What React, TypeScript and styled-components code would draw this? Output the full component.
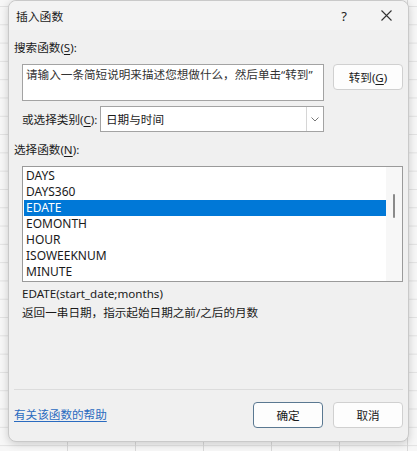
import React from "react";
import styled, { createGlobalStyle } from "styled-components";

const FONT = `"Noto Sans", "Noto Sans CJK SC", sans-serif`;

const GlobalStyle = createGlobalStyle`
  html, body { margin: 0; padding: 0; }
  body {
    width: 417px;
    height: 451px;
    overflow: hidden;
    font-family: ${FONT};
    background-color: #f7f7f7;
    background-image:
      linear-gradient(to right, #d9d9d9 1px, transparent 1px),
      linear-gradient(to bottom, #e2e2e2 1px, transparent 1px);
    background-size: 68px 18.3px;
    background-position: 67px 6px;
  }
`;

const Page = styled.div`
  padding-left: 8px;
  width: 417px;
  height: 451px;
  box-sizing: border-box;
`;

const Dialog = styled.div`
  width: 401px;
  height: 442px;
  box-sizing: border-box;
  background: #f0f0f0;
  border: 1px solid #c9c9c9;
  border-radius: 8px;
  box-shadow: 0 2px 8px rgba(0, 0, 0, 0.18);
  display: flex;
  flex-direction: column;
  font-size: 11.6px;
  color: #1a1a1a;
`;

const TitleBar = styled.div`
  height: 29px;
  display: flex;
  align-items: center;
  padding-left: 7px;
  background: #f3f3f3;
  border-radius: 8px 8px 0 0;
`;

const Title = styled.div`
  flex: 1;
  font-size: 11.8px;
  color: #1a1a1a;
`;

const TitleButton = styled.div<{ $w: number }>`
  width: ${(p) => p.$w}px;
  height: 29px;
  display: flex;
  align-items: center;
  justify-content: center;
  font-size: 13px;
  color: #222;
`;

const Body = styled.div`
  flex: 1;
  display: flex;
  flex-direction: column;
  padding: 0 5px;
`;

const Label = styled.div<{ $top: number; $indent?: number }>`
  margin-top: ${(p) => p.$top}px;
  margin-left: ${(p) => p.$indent ?? 0}px;
  line-height: 16px;
  height: 16px;
  white-space: nowrap;
`;

const Key = styled.span`
  text-decoration: underline;
  text-underline-offset: 2px;
`;

const SearchRow = styled.div`
  margin-top: 8px;
  margin-left: 8px;
  display: flex;
  align-items: flex-start;
  gap: 9px;
`;

const SearchBox = styled.textarea`
  width: 302px;
  height: 37px;
  box-sizing: border-box;
  border: 1px solid #a3a3a3;
  background: #fff;
  padding: 2px 3px;
  margin: 0;
  resize: none;
  outline: none;
  font-family: ${FONT};
  font-size: 11.6px;
  line-height: 16px;
  color: #333;
  overflow: hidden;
`;

const Button = styled.button<{ $primary?: boolean }>`
  width: 70px;
  height: 26px;
  box-sizing: border-box;
  border-radius: 4px;
  border: 1px solid ${(p) => (p.$primary ? "#5a7891" : "#d0d0d0")};
  background: #fdfdfd;
  font-family: ${FONT};
  font-size: 11.6px;
  color: #1a1a1a;
  padding: 0;
  display: flex;
  align-items: center;
  justify-content: center;
`;

const CategoryRow = styled.div`
  margin-top: 5px;
  margin-left: 8px;
  display: flex;
  align-items: center;
  gap: 1px;
`;

const CategoryLabel = styled.div`
  width: 77px;
  white-space: nowrap;
`;

const Combo = styled.div`
  width: 224px;
  height: 26px;
  box-sizing: border-box;
  border: 1px solid #a3a3a3;
  background: #fff;
  display: flex;
  align-items: stretch;
`;

const ComboValue = styled.div`
  flex: 1;
  display: flex;
  align-items: center;
  padding-left: 5px;
`;

const ComboArrow = styled.div`
  width: 16px;
  border-left: 1px solid #d6d6d6;
  display: flex;
  align-items: center;
  justify-content: center;
`;

const List = styled.div`
  margin-top: 8px;
  margin-left: 8px;
  width: 381px;
  height: 116px;
  box-sizing: border-box;
  border: 1px solid #9a9a9a;
  background: #fff;
  display: flex;
  padding: 1px 0 0 1px;
`;

const Items = styled.div`
  width: 362px;
  display: flex;
  flex-direction: column;
`;

const Item = styled.div<{ $selected?: boolean }>`
  height: 16px;
  line-height: 16px;
  padding-left: 2px;
  font-size: 12px;
  background: ${(p) => (p.$selected ? "#0078d7" : "transparent")};
  color: ${(p) => (p.$selected ? "#fff" : "#1a1a1a")};
`;

const ScrollTrack = styled.div`
  flex: 1;
  display: flex;
  justify-content: center;
  background: #f7f7f7;
  margin-top: -1px;
`;

const ScrollThumb = styled.div`
  width: 2px;
  height: 24px;
  margin-top: 27px;
  border-radius: 1px;
  background: #8a8a8a;
`;

const Info = styled.div<{ $top: number }>`
  margin-top: ${(p) => p.$top}px;
  margin-left: 8px;
  line-height: 16px;
  height: 16px;
  white-space: nowrap;
`;

const Spacer = styled.div`
  flex: 1;
`;

const Separator = styled.div`
  height: 1px;
  background: #dcdcdc;
`;

const Footer = styled.div`
  height: 51px;
  display: flex;
  align-items: center;
  gap: 10px;
  padding-bottom: 1px;
  box-sizing: border-box;
`;

const HelpLink = styled.a`
  flex: 1;
  color: #2a6bc0;
  text-decoration: underline;
  text-underline-offset: 2px;
  cursor: pointer;
  margin-top: -2px;
`;

const functions = ["DAYS", "DAYS360", "EDATE", "EOMONTH", "HOUR", "ISOWEEKNUM", "MINUTE"];

export default function App() {
  return (
    <>
      <GlobalStyle />
      <Page>
        <Dialog>
          <TitleBar>
            <Title>插入函数</Title>
            <TitleButton $w={40}>?</TitleButton>
            <TitleButton $w={44}>
              <svg width="11" height="11" viewBox="0 0 11 11">
                <path d="M0.5 0.5 L10.5 10.5 M10.5 0.5 L0.5 10.5" stroke="#333" strokeWidth="1.1" fill="none" />
              </svg>
            </TitleButton>
          </TitleBar>
          <Body>
            <Label $top={10}>
              搜索函数(<Key>S</Key>):
            </Label>
            <SearchRow>
              <SearchBox defaultValue="请输入一条简短说明来描述您想做什么，然后单击“转到”" />
              <Button>
                转到(<Key>G</Key>)
              </Button>
            </SearchRow>
            <CategoryRow>
              <CategoryLabel>
                或选择类别(<Key>C</Key>):
              </CategoryLabel>
              <Combo>
                <ComboValue>日期与时间</ComboValue>
                <ComboArrow>
                  <svg width="8" height="5" viewBox="0 0 8 5">
                    <path d="M0.5 0.5 L4 4 L7.5 0.5" stroke="#777" strokeWidth="1" fill="none" />
                  </svg>
                </ComboArrow>
              </Combo>
            </CategoryRow>
            <Label $top={10}>
              选择函数(<Key>N</Key>):
            </Label>
            <List>
              <Items>
                {functions.map((f) => (
                  <Item key={f} $selected={f === "EDATE"}>
                    {f}
                  </Item>
                ))}
              </Items>
              <ScrollTrack>
                <ScrollThumb />
              </ScrollTrack>
            </List>
            <Info $top={4}>EDATE(start_date;months)</Info>
            <Info $top={3}>返回一串日期，指示起始日期之前/之后的月数</Info>
            <Spacer />
            <Separator />
            <Footer>
              <HelpLink>有关该函数的帮助</HelpLink>
              <Button $primary>确定</Button>
              <Button>取消</Button>
            </Footer>
          </Body>
        </Dialog>
      </Page>
    </>
  );
}
